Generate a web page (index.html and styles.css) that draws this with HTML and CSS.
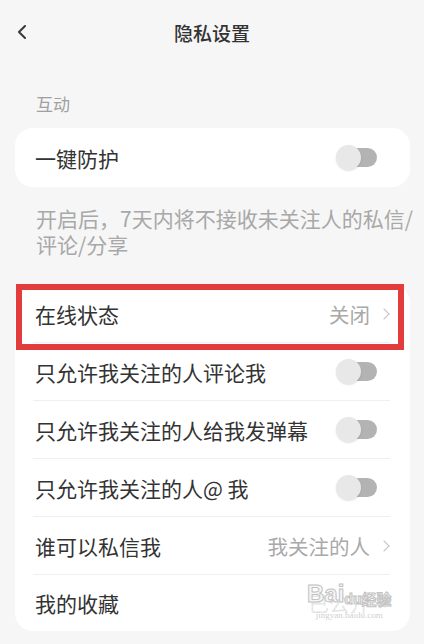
FILE: index.html
```html
<!DOCTYPE html>
<html lang="zh-CN">
<head>
    <meta charset="UTF-8">
    <title>隐私设置</title>
    <link rel="stylesheet" href="styles.css">
</head>
<body>

<div class="page">
    <!-- 顶部导航 -->
    <div class="header">
        <span class="back">
            <svg width="12" height="14" viewBox="0 0 12 14"><path d="M9 1 L3 7 L9 13" fill="none" stroke="#3a3a3a" stroke-width="2" stroke-linecap="round" stroke-linejoin="round"/></svg>
        </span>
        <h1 class="title">隐私设置</h1>
        <span></span>
    </div>

    <div class="section_title">互动</div>

    <div class="card">
        <div class="row">
            <span class="label">一键防护</span>
            <span class="switch"></span>
        </div>
    </div>

    <p class="tip">开启后，7天内将不接收未关注人的私信/<br>评论/分享</p>

    <div class="card list">
        <div class="row">
            <span class="label">在线状态</span>
            <span class="value">关闭<i class="arrow"></i></span>
        </div>
        <div class="row">
            <span class="label">只允许我关注的人评论我</span>
            <span class="switch"></span>
        </div>
        <div class="row">
            <span class="label">只允许我关注的人给我发弹幕</span>
            <span class="switch"></span>
        </div>
        <div class="row">
            <span class="label">只允许我关注的人@ 我</span>
            <span class="switch"></span>
        </div>
        <div class="row">
            <span class="label">谁可以私信我</span>
            <span class="value">我关注的人<i class="arrow"></i></span>
        </div>
        <div class="row last">
            <span class="label">我的收藏</span>
            <span class="value">已公开<i class="arrow"></i></span>
        </div>

        <!-- 标注框 -->
        <div class="mark"></div>
        <!-- 水印 -->
        <div class="watermark">
            <span class="wm_logo">Bai<b>du</b><em>经验</em></span>
            <span class="wm_url">jingyan.baidu.com</span>
        </div>
    </div>
</div>

</body>
</html>
```

FILE: styles.css
```css
body {
    margin: 0;
    background: #f6f6f6;
    font-family: "Noto Sans CJK SC", "Noto Sans", sans-serif;
    color: #333;
}
.page {
    width: 424px;
    height: 644px;
    overflow: hidden;
}

/* 顶部导航 */
.header {
    height: 64px;
    display: grid;
    grid-template-columns: 1fr auto 1fr;
    align-items: center;
}
.back {
    padding-left: 16px;
    display: flex;
    align-items: center;
    margin-top: -1px;
}
.title {
    margin: 0;
    font-size: 19px;
    font-weight: 500;
    color: #333;
}

.section_title {
    margin: 28px 0 12px 36px;
    font-size: 17px;
    line-height: 24px;
    color: #a0a0a0;
}

/* 卡片 */
.card {
    margin: 0 14px 0 15px;
    background: #fff;
    border-radius: 18px;
    padding: 0 20px 0 18px;
}
.row {
    height: 59px;
    display: flex;
    align-items: center;
    justify-content: space-between;
    font-size: 21px;
}
.label {
    color: #333;
    padding-left: 2px;
    white-space: nowrap;
}
.list {
    position: relative;
}
.list .row {
    height: 58px;
    box-sizing: border-box;
    border-bottom: 1px solid #efefef;
}
.list .row.last {
    height: 56px;
    border-bottom: none;
}
.value {
    color: #a9a9a9;
    font-size: 20.5px;
    display: flex;
    align-items: center;
    white-space: nowrap;
}
.arrow {
    width: 7px;
    height: 7px;
    border-top: 1.5px solid #c0c0c0;
    border-right: 1.5px solid #c0c0c0;
    transform: rotate(45deg);
    margin: 0 2px 0 10px;
}

/* 开关 */
.switch {
    position: relative;
    width: 41px;
    height: 25px;
    margin-right: 13px;
    flex-shrink: 0;
}
.switch::before {
    content: "";
    position: absolute;
    right: 0;
    top: 3px;
    width: 30px;
    height: 19px;
    border-radius: 10px;
    background: #b3b3b3;
}
.switch::after {
    content: "";
    position: absolute;
    left: 0;
    top: 0;
    width: 25px;
    height: 25px;
    border-radius: 50%;
    background: #e8e8e8;
    box-shadow: 0 1px 2px rgba(0, 0, 0, 0.12);
}

.tip {
    margin: 18px 0 28px 36px;
    font-size: 21px;
    line-height: 26px;
    color: #a8a8a8;
    white-space: nowrap;
}

/* 红色标注框 */
.mark {
    position: absolute;
    left: 1px;
    top: -1px;
    width: 388px;
    height: 66px;
    box-sizing: border-box;
    border: 6px solid #e23c3c;
}

/* 水印 */
.watermark {
    position: absolute;
    left: 292px;
    top: 294px;
    display: flex;
    flex-direction: column;
    align-items: center;
    white-space: nowrap;
    font-family: "Liberation Sans", sans-serif;
    background: rgba(255, 255, 255, 0.7);
}
.wm_logo {
    font-size: 24px;
    line-height: 30px;
    color: #f6f6f6;
    -webkit-text-stroke: 1px #c2c2c2;
    font-weight: bold;
    display: flex;
    align-items: flex-end;
}
.wm_logo b {
    font-size: 14px;
    line-height: 20px;
}
.wm_logo em {
    font-style: normal;
    font-size: 15px;
    line-height: 20px;
    font-family: "Noto Sans CJK SC", sans-serif;
}
.wm_url {
    font-size: 9px;
    line-height: 12px;
    color: #cfcfcf;
    font-family: "Liberation Serif", serif;
}
```
